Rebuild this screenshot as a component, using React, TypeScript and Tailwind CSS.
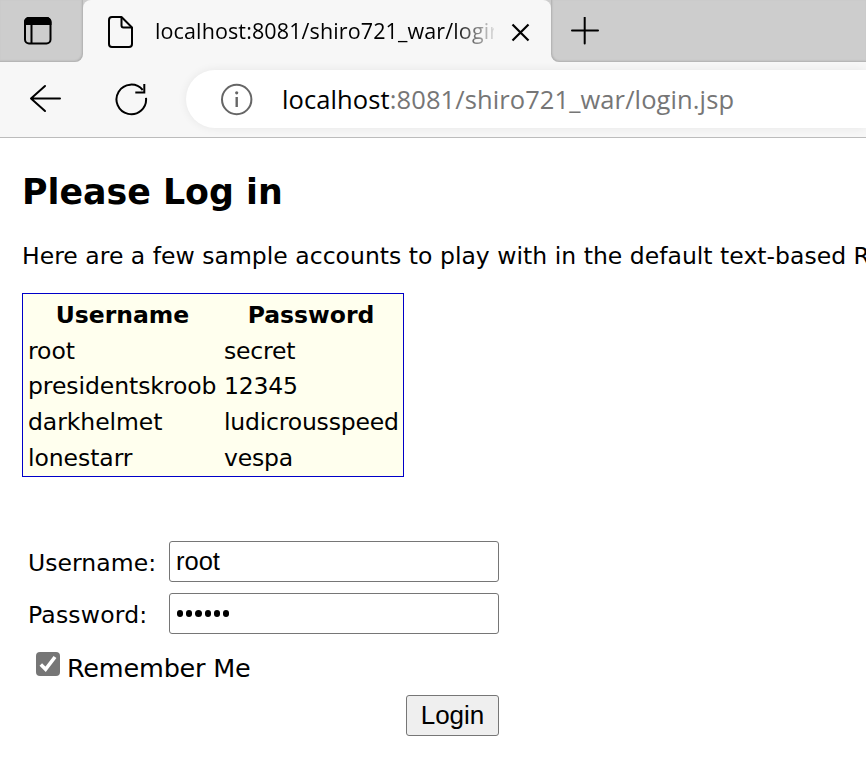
const ACCOUNTS = [
  { user: "root", pass: "secret" },
  { user: "presidentskroob", pass: "12345" },
  { user: "darkhelmet", pass: "ludicrousspeed" },
  { user: "lonestarr", pass: "vespa" },
];

function TabBar() {
  return (
    <div className="flex h-[62px] bg-[#f7f7f7]">
      <div className="flex h-full w-[83px] shrink-0 items-center rounded-br-[8px] bg-[#cdcdcd] pl-[23px] shadow-[inset_-1px_-1px_2px_rgba(0,0,0,0.15)]">
        <svg width="30" height="30" viewBox="0 0 30 30" fill="none">
          <rect x="2" y="2" width="25.500" height="25.500" rx="4" stroke="#000" strokeWidth="2" />
          <path d="M1 9V6a5 5 0 0 1 5-5h17.500a5 5 0 0 1 5 5v3z" fill="#000" />
          <path d="M8.500 8v19" stroke="#000" strokeWidth="2" />
        </svg>
      </div>
      <div className="h-full w-[468px] shrink-0 bg-[linear-gradient(to_bottom,#cdcdcd_10px,#f7f7f7_10px)]">
        <div className="flex h-full items-center rounded-t-[8px] bg-[#f7f7f7]">
          <svg className="ml-[24px] mt-[2px] shrink-0" width="26" height="34" viewBox="0 0 26 34" fill="none" stroke="#000" strokeWidth="2" strokeLinejoin="round">
            <path d="M14.500 2H5A3 3 0 0 0 2 5v24a3 3 0 0 0 3 3h17a3 3 0 0 0 3-3V12.500z" />
            <path d="M14.500 2v8.500a2 2 0 0 0 2 2h8.500" />
          </svg>
          <div className="ml-[22px] w-[339px] overflow-hidden whitespace-nowrap bg-[linear-gradient(to_right,#000_298px,#f7f7f7_344px)] bg-clip-text font-['Open_Sans','Noto_Sans',sans-serif] text-[21.500px] leading-[32px] tracking-[0.120px] text-transparent">
            localhost:8081/shiro721_war/login.jsp
          </div>
          <svg className="ml-[16px] mt-[1px] shrink-0" width="20" height="20" viewBox="0 0 20 20" stroke="#000" strokeWidth="2.200">
            <path d="M2.500 2.500l16 16M18.500 2.500l-16 16" />
          </svg>
        </div>
      </div>
      <div className="flex h-full flex-1 items-center rounded-bl-[8px] bg-[#cdcdcd] pl-[20px] shadow-[inset_1px_-1px_2px_rgba(0,0,0,0.15)]">
        <svg width="28" height="28" viewBox="0 0 28 28" stroke="#000" strokeWidth="2" strokeLinecap="round">
          <path d="M1 13.500h26M13.700 .5v26" />
        </svg>
      </div>
    </div>
  );
}

function Toolbar() {
  return (
    <div className="flex h-[76px] items-start overflow-hidden border-b border-[#bcbcbc] bg-[#f7f7f7] pt-[8px]">
      <svg className="ml-[29px] mt-[13px] shrink-0" width="34" height="32" viewBox="0 0 34 32" fill="none" stroke="#000" strokeWidth="2" strokeLinecap="round" strokeLinejoin="round">
        <path d="M16 3L2 15.500 16 28M2 15.500h29" />
      </svg>
      <svg className="ml-[51px] mt-[12px] shrink-0" width="36" height="36" viewBox="0 0 36 36" fill="none" stroke="#000" strokeWidth="2">
        <path d="M32 15.800A14.800 14.800 0 1 1 28.700 8" />
        <path d="M30.300 2v8.500h-9" />
      </svg>
      <div className="ml-[36px] flex h-[58px] flex-1 items-center rounded-l-full bg-white pl-[34px] shadow-[0_0_10px_rgba(0,0,0,0.07)]">
        <svg className="shrink-0" width="34" height="34" viewBox="0 0 34 34" fill="none" stroke="#666" strokeWidth="2">
          <circle cx="16.700" cy="17.500" r="14.700" />
          <path d="M16.700 15v10" strokeWidth="2.400" />
          <circle cx="16.700" cy="10.800" r="1.600" fill="#666" stroke="none" />
        </svg>
        <div className="ml-[28px] whitespace-nowrap font-['Open_Sans','Noto_Sans',sans-serif] text-[25.500px] leading-[40px] tracking-[0.100px] text-[#767676]">
          <span className="text-black">localhost</span>:8081/shiro721_war/login.jsp
        </div>
      </div>
    </div>
  );
}

export default function App() {
  return (
    <div className="h-[781px] w-[866px] overflow-hidden bg-white font-['DejaVu_Sans',Verdana,sans-serif] text-[23.500px] text-black">
      <TabBar />
      <Toolbar />
      <main className="pl-[22px] pt-[32px]">
        <h2 className="whitespace-nowrap text-[34.800px] font-bold leading-[44px]">Please Log in</h2>
        <p className="mt-[24px] whitespace-nowrap leading-[36px] tracking-[0.020px]">
          Here are a few sample accounts to play with in the default text-based Realm
        </p>
        <div className="mt-[19px] grid h-[184px] w-[382px] grid-cols-[196px_174px] content-start border border-[#0000c8] bg-[#ffffee] pl-[5px] pt-[4px] leading-[35.700px]">
          <div className="pr-[7px] text-center font-bold">Username</div>
          <div className="text-center font-bold">Password</div>
          {ACCOUNTS.map((a) => (
            <div key={a.user} className="contents">
              <div className="tracking-[-0.070px]">{a.user}</div>
              <div className="tracking-[-0.200px]">{a.pass}</div>
            </div>
          ))}
        </div>
        <form className="mt-[64px] w-[477px]">
          <div className="flex h-[41px] items-center">
            <label className="w-[147px] whitespace-nowrap pl-[6px] pt-[5px] tracking-[0.050px]">Username:</label>
            <div className="flex h-full flex-1 items-center rounded-[3px] border border-[#767676] pl-[6px] font-['Liberation_Sans',Arial,sans-serif] text-[25.500px]">
              root
            </div>
          </div>
          <div className="mt-[11px] flex h-[41px] items-center">
            <label className="w-[147px] whitespace-nowrap pl-[6px] pt-[5px] tracking-[0.200px]">Password:</label>
            <div className="flex h-full flex-1 items-center gap-[3px] rounded-[3px] border border-[#767676] pl-[7px]">
              {[0, 1, 2, 3, 4, 5].map((i) => (
                <span key={i} className="h-[6.200px] w-[6.200px] rounded-full bg-black" />
              ))}
            </div>
          </div>
          <label className="mt-[14px] flex h-[40px] items-center pl-[14px]">
            <span className="mb-[8px] flex h-[24px] w-[24px] items-center justify-center rounded-[4px] bg-[#767676]">
              <svg width="24" height="24" viewBox="0 0 24 24" fill="none" stroke="#fff" strokeWidth="3.600">
                <path d="M4.800 12.500l4.800 4.800L19 5" />
              </svg>
            </span>
            <span className="ml-[7px] whitespace-nowrap pt-[1px] text-[25.500px] tracking-[-0.200px]">Remember Me</span>
          </label>
          <div className="mt-[7px] flex justify-end">
            <button type="button" className="h-[41px] w-[93px] rounded-[3px] border border-[#767676] bg-[#efefef] pb-[1px] font-['Liberation_Sans',Arial,sans-serif] text-[26px] leading-[38px]">
              Login
            </button>
          </div>
        </form>
      </main>
    </div>
  );
}
